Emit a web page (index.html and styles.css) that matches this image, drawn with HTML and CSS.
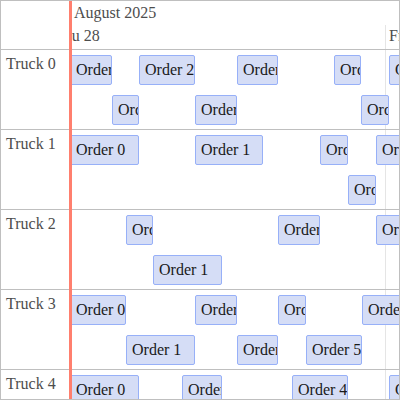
FILE: index.html
```html
<!DOCTYPE html>
<html lang="en">
<head>
    <meta charset="UTF-8">
    <meta name="viewport" content="width=device-width, initial-scale=1.0">
    <title>Truck schedule</title>
    <link rel="stylesheet" href="styles.css">
</head>
<body>
    <div class="timeline">
        <div class="labels">
            <div class="labels-head"></div>
            <div class="label">Truck 0</div>
            <div class="label">Truck 1</div>
            <div class="label">Truck 2</div>
            <div class="label">Truck 3</div>
            <div class="label">Truck 4</div>
        </div>

        <div class="center">
            <div class="axis">
                <div class="axis-major">
                    <span class="axis-text" style="left: 0px">August 2025</span>
                </div>
                <div class="axis-minor">
                    <span class="axis-text" style="left: -20px">Thu 28</span>
                    <span class="axis-text" style="left: 315px">Fri 29</span>
                </div>
            </div>
            <div class="grid-line" style="left: 315px"></div>

            <!-- Truck 0 -->
            <div class="row">
                <div class="lane">
                    <div class="order" style="left: 0px; width: 42px">Order 0</div>
                    <div class="order" style="left: 69px; width: 56px">Order 2</div>
                    <div class="order" style="left: 167px; width: 41px">Order 4</div>
                    <div class="order" style="left: 264px; width: 27px">Order 5</div>
                    <div class="order" style="left: 319px; width: 51px">Order 7</div>
                </div>
                <div class="lane">
                    <div class="order" style="left: 42px; width: 27px">Order 1</div>
                    <div class="order" style="left: 125px; width: 42px">Order 3</div>
                    <div class="order" style="left: 291px; width: 28px">Order 6</div>
                </div>
            </div>

            <!-- Truck 1 -->
            <div class="row">
                <div class="lane">
                    <div class="order" style="left: 0px; width: 69px">Order 0</div>
                    <div class="order" style="left: 125px; width: 68px">Order 1</div>
                    <div class="order" style="left: 250px; width: 28px">Order 2</div>
                    <div class="order" style="left: 306px; width: 54px">Order 4</div>
                </div>
                <div class="lane">
                    <div class="order" style="left: 278px; width: 28px">Order 3</div>
                </div>
            </div>

            <!-- Truck 2 -->
            <div class="row">
                <div class="lane">
                    <div class="order" style="left: 56px; width: 27px">Order 0</div>
                    <div class="order" style="left: 208px; width: 42px">Order 2</div>
                    <div class="order" style="left: 306px; width: 54px">Order 3</div>
                </div>
                <div class="lane">
                    <div class="order" style="left: 83px; width: 69px">Order 1</div>
                </div>
            </div>

            <!-- Truck 3 -->
            <div class="row">
                <div class="lane">
                    <div class="order" style="left: 0px; width: 56px">Order 0</div>
                    <div class="order" style="left: 125px; width: 42px">Order 2</div>
                    <div class="order" style="left: 208px; width: 28px">Order 4</div>
                    <div class="order" style="left: 292px; width: 68px">Order 6</div>
                </div>
                <div class="lane">
                    <div class="order" style="left: 56px; width: 69px">Order 1</div>
                    <div class="order" style="left: 167px; width: 41px">Order 3</div>
                    <div class="order" style="left: 236px; width: 56px">Order 5</div>
                </div>
            </div>

            <!-- Truck 4 -->
            <div class="row">
                <div class="lane">
                    <div class="order" style="left: 0px; width: 69px">Order 0</div>
                    <div class="order" style="left: 112px; width: 40px">Order 1</div>
                    <div class="order" style="left: 222px; width: 56px">Order 4</div>
                    <div class="order" style="left: 319px; width: 51px">Order 6</div>
                </div>
            </div>
        </div>

        <div class="now-line"></div>
    </div>
</body>
</html>
```

FILE: styles.css
```css
body {
    margin: 0;
    font-family: "Liberation Serif", serif;
    font-size: 16px;
    background: white;
}
.timeline {
    position: relative;
    display: grid;
    grid-template-columns: 69px 1fr;
    width: 400px;
    height: 400px;
    box-sizing: border-box;
    border: 1px solid #bfbfbf;
    overflow: hidden;
    color: #4d4d4d;
}
.labels {
    display: flex;
    flex-direction: column;
    border-right: 1px solid #bfbfbf;
}
.labels-head {
    flex: 0 0 49px;
    box-sizing: border-box;
    border-bottom: 1px solid #bfbfbf;
}
.label {
    flex: 0 0 80px;
    box-sizing: border-box;
    padding: 5px;
    border-bottom: 1px solid #bfbfbf;
}
.center {
    position: relative;
    isolation: isolate;
    display: flex;
    flex-direction: column;
    overflow: hidden;
}
.axis {
    flex: 0 0 49px;
    box-sizing: border-box;
    border-bottom: 1px solid #bfbfbf;
}
.axis-major,
.axis-minor {
    position: relative;
    height: 24px;
}
.axis-major .axis-text {
    padding: 3px 4px;
}
.axis-minor .axis-text {
    padding: 2px 4px;
}
.axis-text {
    position: absolute;
    top: 0;
    white-space: nowrap;
}
.grid-line {
    position: absolute;
    top: 24px;
    bottom: 0;
    width: 1px;
    background: #e5e5e5;
    z-index: -1;
}
.row {
    flex: 0 0 80px;
    box-sizing: border-box;
    display: flex;
    flex-direction: column;
    gap: 10px;
    padding-top: 5px;
    border-bottom: 1px solid #bfbfbf;
}
.lane {
    position: relative;
    height: 30px;
}
.order {
    position: absolute;
    top: 0;
    height: 30px;
    box-sizing: border-box;
    padding: 5px 5px 3px;
    border: 1px solid #97b0f8;
    border-radius: 2px;
    background: #d5ddf6;
    color: #1a1a1a;
    white-space: nowrap;
    overflow: hidden;
}
.now-line {
    position: absolute;
    top: 0;
    bottom: 0;
    left: 68px;
    width: 3px;
    background: #ff7f6e;
}
```
